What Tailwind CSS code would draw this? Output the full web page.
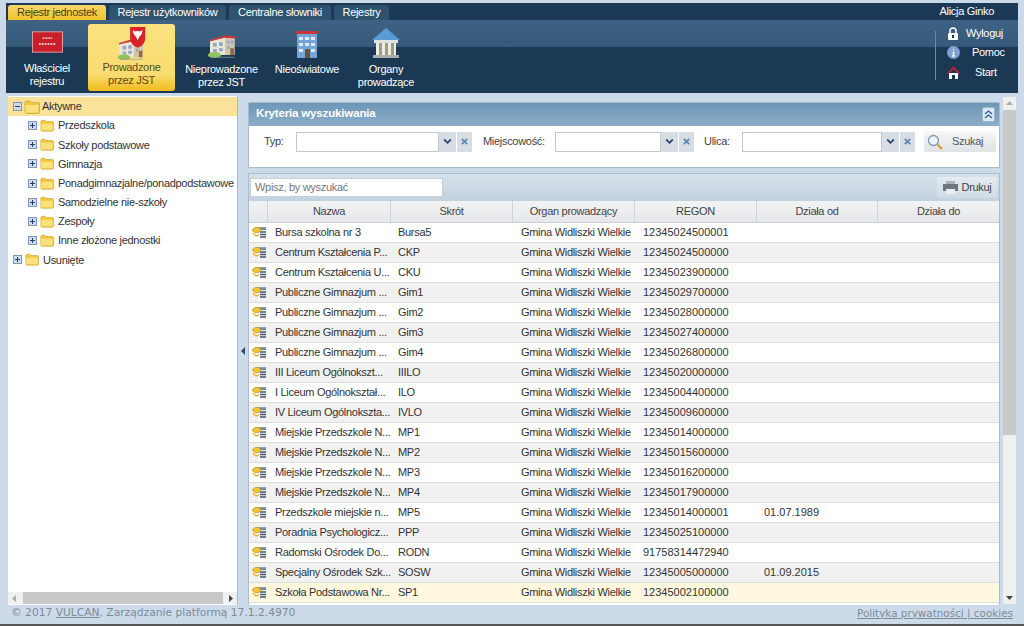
<!DOCTYPE html>
<html lang="pl"><head><meta charset="utf-8"><title>Rejestr jednostek</title>
<script src="https://cdn.jsdelivr.net/npm/@tailwindcss/browser@4"></script></head>
<body class="w-[1024px] h-[626px] overflow-hidden bg-[#cddaea] font-['Liberation_Sans',sans-serif] text-[11px] tracking-[-0.3px] text-[#333] flex flex-col">
<svg class="hidden">
<symbol id="plus" viewBox="0 0 9 9"><rect x=".5" y=".5" width="8" height="8" fill="#cfdcec" stroke="#7f97b5"/><path d="M2 4.500h5M4.500 2v5" stroke="#1d3f73"/></symbol>
<symbol id="minus" viewBox="0 0 9 9"><rect x=".5" y=".5" width="8" height="8" fill="#cfdcec" stroke="#7f97b5"/><path d="M2 4.500h5" stroke="#1d3f73"/></symbol>
<symbol id="folder" viewBox="0 0 16 14"><path d="M1 2.500q0-1.500 1.500-1.500h3l1.500 1.500h7q1.500 0 1.500 1.500v8q0 1.500-1.500 1.500h-11.500q-1.500 0-1.500-1.500z" fill="#f3c63c" stroke="#c9a032" stroke-width=".7"/><path d="M1.500 5h13v7.500h-13z" fill="#fbe27d"/></symbol>
<symbol id="row" viewBox="0 0 16 14"><path d="M7 3h8M9 6h6M9 8.500h6M9 11h6" stroke="#40576f" stroke-width="1.300"/><path d="M7 1h8v1.500h-8z" fill="#8da0b4"/><path d="M1 4l3-2.500h4l2 2.500-2 2.500h-4z" fill="#f0c53a" stroke="#c09018" stroke-width=".7"/><path d="M2 7l3 3 3-1" fill="none" stroke="#e8b52c" stroke-width="1.500"/></symbol>
<symbol id="school" viewBox="0 0 40 36"><path d="M4 12l20-5v25H4z" fill="#ece6d8"/><path d="M24 8h13v24H24z" fill="#cfc4ae"/><path d="M3 12l21-6 14 1v3l-14-1-21 5z" fill="#c9363a"/><g fill="#8fa9c4"><path d="M8 16h5v5H8zM16 15h5v5h-5zM8 24h5v4H8zM16 23h5v4h-5zM27 13h3v4h-3zM32 13h3v4h-3zM27 20h3v4h-3z"/></g><path d="M31 23h5v9h-5z" fill="#9a6a3e"/><ellipse cx="10" cy="32" rx="9" ry="4" fill="#8fc45a"/><path d="M5 35h32" stroke="#999"/></symbol>
<symbol id="chev" viewBox="0 0 9 7"><path d="M1.200 1.500l3.300 3.300 3.300-3.300" fill="none" stroke="#2c4a73" stroke-width="1.800"/></symbol>
<symbol id="clr" viewBox="0 0 9 9"><path d="M1.800 1.800l5.400 5.400M7.200 1.800l-5.400 5.400" stroke="#5d86b5" stroke-width="1.700"/></symbol>
</svg>

<header class="mt-[3px] ml-[6px] w-[1012px] h-[90px] shrink-0 bg-[linear-gradient(#1c3a57_0,#1c3a57_17px,#3e6283_17px,#365a7a_44px,#1b3954_44px,#1b3954_100%)] text-white flex flex-col">
  <div class="h-[17px] flex justify-between items-end shrink-0">
    <nav class="flex items-end gap-[3px] pl-[2px] h-[15px] leading-[15px]">
      <span class="w-[98px] text-center rounded-t-[3px] bg-[linear-gradient(#f5d66a,#f3c32a)] text-[#4a3d10]">Rejestr jednostek</span>
      <span class="w-[117px] text-center rounded-t-[3px] bg-[#2f536f]">Rejestr użytkowników</span>
      <span class="w-[102px] text-center rounded-t-[3px] bg-[#2f536f]">Centralne słowniki</span>
      <span class="w-[55px] text-center rounded-t-[3px] bg-[#2f536f]">Rejestry</span>
    </nav>
    <span class="mr-[24px] h-[15px] leading-[15px] self-center">Alicja Ginko</span>
  </div>
  <div class="flex flex-1 justify-between">
    <nav class="flex leading-[13px] text-center">
      <a class="w-[82px] pt-[11px] flex flex-col items-center">
        <svg class="w-[31px] h-[22px] mb-[9px]" viewBox="0 0 32 22"><rect x=".5" y=".5" width="31" height="21" fill="#c81f2a" stroke="#d9a0a0"/><path d="M11 7h10M7 13h18" stroke="#efc0c0" stroke-width="2" stroke-dasharray="2 1"/></svg>
        <span>Właściciel<br>rejestru</span>
      </a>
      <a class="w-[87px] mt-[4px] h-[67px] rounded-[3px] pt-[2px] flex flex-col items-center bg-[linear-gradient(#fbe27f,#f9dc70_75%,#f0bb1d)] text-[#5a4c1c]">
        <svg class="w-[32px] h-[34px] mb-[1px]" viewBox="0 0 32 36"><use href="#school" width="30" height="27" x="0" y="9"/><path d="M14 1h16v12q0 7-8 10-8-3-8-10z" fill="#d8232a"/><path d="M22 5q3 2 5-1 0 5-3 7l-2 4-2-4q-3-2-3-7 2 3 5 1z" fill="#fff"/></svg>
        <span>Prowadzone<br>przez JST</span>
      </a>
      <a class="w-[93px] pt-[11px] flex flex-col items-center">
        <svg class="w-[30px] h-[27px] mb-[5px]" viewBox="0 0 40 36"><use href="#school"/></svg>
        <span>Nieprowadzone<br>przez JST</span>
      </a>
      <a class="w-[78px] pt-[10px] flex flex-col items-center">
        <svg class="w-[22px] h-[28px] mb-[5px]" viewBox="0 0 22 28"><path d="M1 3h20v25H1z" fill="#74a5d8"/><path d="M0 1h22v3H0z" fill="#c9363a"/><path d="M3 7h4v3H3zM9 7h4v3H9zM15 7h4v3h-4zM3 13h4v3H3zM9 13h4v3H9zM15 13h4v3h-4zM3 19h4v3H3zM15 19h4v3h-4z" fill="#dfeaf5"/><path d="M9 19h5v9H9z" fill="#6d5039"/></svg>
        <span>Nieoświatowe</span>
      </a>
      <a class="w-[80px] pt-[8px] flex flex-col items-center">
        <svg class="w-[30px] h-[31px] mb-[4px]" viewBox="0 0 30 31"><path d="M15 0l14 12H1z" fill="#5b9bd5"/><path d="M3 12h24v3H3z" fill="#dfe4e4"/><path d="M5 15h20v12H5z" fill="#f0ece0"/><path d="M8 15h3v12H8zM14 15h3v12h-3zM20 15h3v12h-3z" fill="#9b9b8e"/><path d="M2 27h26v3H2z" fill="#a8b0b0"/></svg>
        <span>Organy<br>prowadzące</span>
      </a>
    </nav>
    <aside class="relative w-[83px] pt-[5px] flex flex-col gap-[3.500px] before:absolute before:left-0 before:top-[11px] before:h-[49px] before:w-px before:bg-[#6f8aa3]">
      <div class="flex items-center h-[16px]"><svg class="w-[12px] h-[13px] ml-[12px]" viewBox="0 0 12 13"><path d="M3 6V4a3 3 0 016 0v2" fill="none" stroke="#fff" stroke-width="1.500"/><rect x="1" y="6" width="10" height="7" rx="1" fill="#fff"/><rect x="5" y="8" width="2" height="3" fill="#1b3954"/></svg><span class="ml-[7px]">Wyloguj</span></div>
      <div class="flex items-center h-[16px]"><svg class="w-[13px] h-[13px] ml-[12px]" viewBox="0 0 13 13"><circle cx="6.500" cy="6.500" r="6.500" fill="#7fa3d0"/><path d="M6.500 3v1M6.500 5.500V10M5 10h3" stroke="#fff" stroke-width="1.500"/></svg><span class="ml-[12px]">Pomoc</span></div>
      <div class="flex items-center h-[16px]"><svg class="w-[13px] h-[13px] ml-[12px]" viewBox="0 0 13 13"><path d="M2 7v6h3V9h3v4h3V7z" fill="#fff"/><path d="M0 7l6.500-6.500L13 7l-1 1-5.500-5L1 8z" fill="#d5202a"/></svg><span class="ml-[15px]">Start</span></div>
    </aside>
  </div>
</header>

<main class="flex flex-1 min-h-0 mt-[3px] ml-[8px] mr-[7px]">
  <section class="w-[230px] shrink-0 bg-white border-r border-[#a8b8c8] flex flex-col justify-between">
    <div class="pt-[1px]">
      <div class="h-[19px] bg-[#fbe29a] flex items-center pl-[5px]"><svg class="w-[9px] h-[9px] shrink-0"><use href="#minus"/></svg><svg class="w-[16px] h-[16px] ml-[2px] shrink-0"><use href="#folder"/></svg><span class="ml-[2px]">Aktywne</span></div>
      <ul class="[&>li]:h-[19.200px] [&>li]:flex [&>li]:items-center [&>li]:pl-[20px] [&_svg]:shrink-0">
        <li><svg class="w-[9px] h-[9px]"><use href="#plus"/></svg><svg class="w-[14px] h-[13px] ml-[3px]"><use href="#folder"/></svg><span class="ml-[4px]">Przedszkola</span></li>
        <li><svg class="w-[9px] h-[9px]"><use href="#plus"/></svg><svg class="w-[14px] h-[13px] ml-[3px]"><use href="#folder"/></svg><span class="ml-[4px]">Szkoły podstawowe</span></li>
        <li><svg class="w-[9px] h-[9px]"><use href="#plus"/></svg><svg class="w-[14px] h-[13px] ml-[3px]"><use href="#folder"/></svg><span class="ml-[4px]">Gimnazja</span></li>
        <li><svg class="w-[9px] h-[9px]"><use href="#plus"/></svg><svg class="w-[14px] h-[13px] ml-[3px]"><use href="#folder"/></svg><span class="ml-[4px] whitespace-nowrap">Ponadgimnazjalne/ponadpodstawowe</span></li>
        <li><svg class="w-[9px] h-[9px]"><use href="#plus"/></svg><svg class="w-[14px] h-[13px] ml-[3px]"><use href="#folder"/></svg><span class="ml-[4px]">Samodzielne nie-szkoły</span></li>
        <li><svg class="w-[9px] h-[9px]"><use href="#plus"/></svg><svg class="w-[14px] h-[13px] ml-[3px]"><use href="#folder"/></svg><span class="ml-[4px]">Zespoły</span></li>
        <li><svg class="w-[9px] h-[9px]"><use href="#plus"/></svg><svg class="w-[14px] h-[13px] ml-[3px]"><use href="#folder"/></svg><span class="ml-[4px]">Inne złożone jednostki</span></li>
        <li class="!pl-[5px]"><svg class="w-[9px] h-[9px]"><use href="#plus"/></svg><svg class="w-[14px] h-[13px] ml-[3px]"><use href="#folder"/></svg><span class="ml-[4px]">Usunięte</span></li>
      </ul>
    </div>
    <div class="h-[12px] mb-[1px] bg-[#f0f0f0] flex items-center justify-between px-[4px] text-[#555]">
      <svg class="w-[4px] h-[7px]" viewBox="0 0 4 7"><path d="M4 0v7L0 3.500z" fill="#aaa"/></svg>
      <div class="h-[12px] w-[200px] bg-[#c8c8c8]"></div>
      <svg class="w-[4px] h-[7px]" viewBox="0 0 4 7"><path d="M0 0v7l4-3.500z" fill="#444"/></svg>
    </div>
  </section>

  <div class="w-[10px] shrink-0 flex items-center justify-center"><svg class="w-[4px] h-[8px]" viewBox="0 0 4 8"><path d="M4 0v8L0 4z" fill="#2d4a66"/></svg></div>

  <section class="w-[752px] shrink-0 pt-[6px] flex flex-col mr-[3px]">
    <div class="h-[66px] shrink-0 border border-[#a8bccd] bg-white">
      <div class="h-[23px] bg-[linear-gradient(#6d96b7,#8cadc9)] flex items-center justify-between pl-[7px] pr-[4px]">
        <span class="text-white font-bold text-[11.500px] tracking-[-0.15px] leading-[21px] mb-[2px]">Kryteria wyszukiwania</span>
        <span class="w-[13px] h-[15px] bg-[#dbe8f5] rounded-[2px] border border-[#9db6cc] flex items-center justify-center"><svg class="w-[9px] h-[9px]" viewBox="0 0 9 9"><path d="M1 4l3.500-3L8 4M1 8l3.500-3L8 8" fill="none" stroke="#2e5f94" stroke-width="1.300"/></svg></span>
      </div>
      <div class="flex items-center pt-[5px] text-[#444]">
        <span class="ml-[15px] w-[32px]">Typ:</span>
        <span class="w-[143px] h-[20px] border border-[#c0c8d0] bg-white"></span>
        <span class="w-[17px] h-[20px] bg-[#d7dde3] flex items-center justify-center"><svg class="w-[9px] h-[7px]"><use href="#chev"/></svg></span>
        <span class="w-[15px] h-[20px] ml-[1px] bg-[#d7dde3] flex items-center justify-center"><svg class="w-[9px] h-[9px]"><use href="#clr"/></svg></span>
        <span class="ml-[11px] w-[72px]">Miejscowość:</span>
        <span class="w-[106px] h-[20px] border border-[#c0c8d0] bg-white"></span>
        <span class="w-[17px] h-[20px] bg-[#d7dde3] flex items-center justify-center"><svg class="w-[9px] h-[7px]"><use href="#chev"/></svg></span>
        <span class="w-[15px] h-[20px] ml-[1px] bg-[#d7dde3] flex items-center justify-center"><svg class="w-[9px] h-[9px]"><use href="#clr"/></svg></span>
        <span class="ml-[10px] w-[38px]">Ulica:</span>
        <span class="w-[140px] h-[20px] border border-[#c0c8d0] bg-white"></span>
        <span class="w-[17px] h-[20px] bg-[#d7dde3] flex items-center justify-center"><svg class="w-[9px] h-[7px]"><use href="#chev"/></svg></span>
        <span class="w-[15px] h-[20px] ml-[1px] bg-[#d7dde3] flex items-center justify-center"><svg class="w-[9px] h-[9px]"><use href="#clr"/></svg></span>
        <span class="ml-[9px] w-[72px] h-[21px] rounded-[2px] bg-[linear-gradient(#f7f7f7,#dfe3e6)] flex items-center text-[#555]"><svg class="w-[16px] h-[16px] ml-[3px]" viewBox="0 0 16 16"><circle cx="6.500" cy="6.500" r="5" fill="#eef4f8" stroke="#7e9ab0" stroke-width="1.300"/><path d="M10.500 10.500l4.500 4.500" stroke="#d49a2e" stroke-width="2"/></svg><span class="ml-[9px]">Szukaj</span></span>
      </div>
    </div>

    <div class="flex-1 mt-[5px] min-h-0 border-x border-t border-[#a8bccd] bg-white flex flex-col">
      <div class="h-[27px] shrink-0 bg-[linear-gradient(#d6e1ea,#c2d1de)] flex items-center justify-between pl-[1px] pr-[2px]">
        <span class="w-[193px] h-[19px] bg-white border border-[#c8d0d8] pl-[4px] leading-[17px] text-[#777] text-[11px]">Wpisz, by wyszukać</span>
        <span class="w-[60px] h-[21px] rounded-[2px] bg-[linear-gradient(#e4ebf0,#cfdbe4)] flex items-center justify-center gap-[4px] text-[#444]"><svg class="w-[15px] h-[13px]" viewBox="0 0 15 13"><path d="M3 0h9v3H3z" fill="#aeb4ba"/><path d="M0 3h15v7H0z" fill="#6e767e"/><path d="M3 8h9v5H3z" fill="#eee"/></svg>Drukuj</span>
      </div>
      <div class="grid grid-cols-[19px_123px_122px_122px_122px_121px_121px] h-[22px] shrink-0 bg-[linear-gradient(#f3f3f3,#e4e7ea)] border-b border-[#c8d0d8] text-center leading-[20px] text-[#444] [&>span]:border-r [&>span]:border-[#ccd4da]">
        <span></span><span>Nazwa</span><span>Skrót</span><span>Organ prowadzący</span><span>REGON</span><span>Działa od</span><span class="!border-r-0">Działa do</span>
      </div>
      <div class="flex-1 min-h-0 overflow-hidden [&>div]:grid [&>div]:grid-cols-[19px_123px_122px_122px_122px_121px_121px] [&>div]:h-[20px] [&>div]:leading-[19px] [&>div]:border-b [&>div]:border-[#dcdcdc] [&>div]:items-center [&_span]:pl-[7px] [&_span]:whitespace-nowrap [&_span:nth-of-type(3)]:pl-[8px] [&_span:nth-of-type(4)]:pl-[8px] [&_span:nth-of-type(4)]:tracking-normal [&_span:nth-of-type(5)]:tracking-normal [&>div:nth-child(even)]:bg-[#f1f1f1]">
        <div><svg class="w-[16px] h-[14px] ml-[2px]"><use href="#row"/></svg><span>Bursa szkolna nr 3</span><span>Bursa5</span><span>Gmina Widliszki Wielkie</span><span>12345024500001</span><span></span><span></span></div>
        <div><svg class="w-[16px] h-[14px] ml-[2px]"><use href="#row"/></svg><span>Centrum Kształcenia P...</span><span>CKP</span><span>Gmina Widliszki Wielkie</span><span>12345024500000</span><span></span><span></span></div>
        <div><svg class="w-[16px] h-[14px] ml-[2px]"><use href="#row"/></svg><span>Centrum Kształcenia U...</span><span>CKU</span><span>Gmina Widliszki Wielkie</span><span>12345023900000</span><span></span><span></span></div>
        <div><svg class="w-[16px] h-[14px] ml-[2px]"><use href="#row"/></svg><span>Publiczne Gimnazjum ...</span><span>Gim1</span><span>Gmina Widliszki Wielkie</span><span>12345029700000</span><span></span><span></span></div>
        <div><svg class="w-[16px] h-[14px] ml-[2px]"><use href="#row"/></svg><span>Publiczne Gimnazjum ...</span><span>Gim2</span><span>Gmina Widliszki Wielkie</span><span>12345028000000</span><span></span><span></span></div>
        <div><svg class="w-[16px] h-[14px] ml-[2px]"><use href="#row"/></svg><span>Publiczne Gimnazjum ...</span><span>Gim3</span><span>Gmina Widliszki Wielkie</span><span>12345027400000</span><span></span><span></span></div>
        <div><svg class="w-[16px] h-[14px] ml-[2px]"><use href="#row"/></svg><span>Publiczne Gimnazjum ...</span><span>Gim4</span><span>Gmina Widliszki Wielkie</span><span>12345026800000</span><span></span><span></span></div>
        <div><svg class="w-[16px] h-[14px] ml-[2px]"><use href="#row"/></svg><span>III Liceum Ogólnokszt...</span><span>IIILO</span><span>Gmina Widliszki Wielkie</span><span>12345020000000</span><span></span><span></span></div>
        <div><svg class="w-[16px] h-[14px] ml-[2px]"><use href="#row"/></svg><span>I Liceum Ogólnokształ...</span><span>ILO</span><span>Gmina Widliszki Wielkie</span><span>12345004400000</span><span></span><span></span></div>
        <div><svg class="w-[16px] h-[14px] ml-[2px]"><use href="#row"/></svg><span>IV Liceum Ogólnokszta...</span><span>IVLO</span><span>Gmina Widliszki Wielkie</span><span>12345009600000</span><span></span><span></span></div>
        <div><svg class="w-[16px] h-[14px] ml-[2px]"><use href="#row"/></svg><span>Miejskie Przedszkole N...</span><span>MP1</span><span>Gmina Widliszki Wielkie</span><span>12345014000000</span><span></span><span></span></div>
        <div><svg class="w-[16px] h-[14px] ml-[2px]"><use href="#row"/></svg><span>Miejskie Przedszkole N...</span><span>MP2</span><span>Gmina Widliszki Wielkie</span><span>12345015600000</span><span></span><span></span></div>
        <div><svg class="w-[16px] h-[14px] ml-[2px]"><use href="#row"/></svg><span>Miejskie Przedszkole N...</span><span>MP3</span><span>Gmina Widliszki Wielkie</span><span>12345016200000</span><span></span><span></span></div>
        <div><svg class="w-[16px] h-[14px] ml-[2px]"><use href="#row"/></svg><span>Miejskie Przedszkole N...</span><span>MP4</span><span>Gmina Widliszki Wielkie</span><span>12345017900000</span><span></span><span></span></div>
        <div><svg class="w-[16px] h-[14px] ml-[2px]"><use href="#row"/></svg><span>Przedszkole miejskie n...</span><span>MP5</span><span>Gmina Widliszki Wielkie</span><span>12345014000001</span><span>01.07.1989</span><span></span></div>
        <div><svg class="w-[16px] h-[14px] ml-[2px]"><use href="#row"/></svg><span>Poradnia Psychologicz...</span><span>PPP</span><span>Gmina Widliszki Wielkie</span><span>12345025100000</span><span></span><span></span></div>
        <div><svg class="w-[16px] h-[14px] ml-[2px]"><use href="#row"/></svg><span>Radomski Ośrodek Do...</span><span>RODN</span><span>Gmina Widliszki Wielkie</span><span>91758314472940</span><span></span><span></span></div>
        <div><svg class="w-[16px] h-[14px] ml-[2px]"><use href="#row"/></svg><span>Specjalny Ośrodek Szk...</span><span>SOSW</span><span>Gmina Widliszki Wielkie</span><span>12345005000000</span><span>01.09.2015</span><span></span></div>
        <div class="bg-[#fff8df]"><svg class="w-[16px] h-[14px] ml-[2px]"><use href="#row"/></svg><span>Szkoła Podstawowa Nr...</span><span>SP1</span><span>Gmina Widliszki Wielkie</span><span>12345002100000</span><span></span><span></span></div>
      </div>
    </div>
  </section>

  <div class="w-[13px] shrink-0 mt-[1px] mb-[1px] bg-[#f0f0f0] flex flex-col justify-between items-center">
    <div class="w-full"><svg class="w-[7px] h-[4px] mx-auto mt-[4px] mb-[5px]" viewBox="0 0 7 4"><path d="M0 4h7L3.500 0z" fill="#aaa"/></svg><div class="h-[325px] bg-[#c8c8c8]"></div></div>
    <svg class="w-[7px] h-[4px] mb-[4px]" viewBox="0 0 7 4"><path d="M0 0h7L3.500 4z" fill="#444"/></svg>
  </div>
</main>

<footer class="h-[21px] shrink-0 pb-[2px] pl-[11px] pr-[11px] flex items-center justify-between border-b-2 border-[#555] font-['DejaVu_Sans',sans-serif] tracking-normal text-[#7d8b99]">
  <span class="text-[10.700px]">© 2017 <u>VULCAN</u>, Zarządzanie platformą 17.1.2.4970</span>
  <u class="text-[10.400px]">Polityka prywatności | cookies</u>
</footer>
</body></html>
